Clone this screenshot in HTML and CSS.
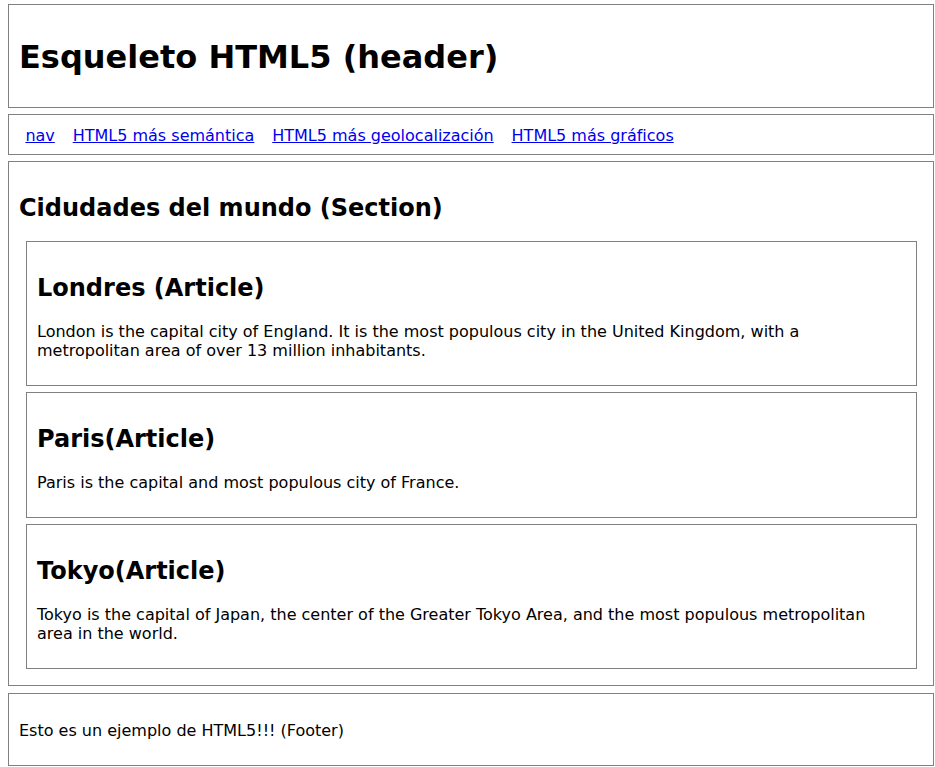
FILE: index.html
```html
<!DOCTYPE html>
<html lang="es">
<head>
<meta charset="utf-8">
<title>Esqueleto HTML5</title>
<link rel="stylesheet" href="styles.css">
</head>
<body>
<div class="page">
  <header class="box">
    <h1 class="title">Esqueleto HTML5 (header)</h1>
  </header>
  <nav class="box nav">
    <a href="#">nav</a>
    <a href="#">HTML5 más semántica</a>
    <a href="#">HTML5 más geolocalización</a>
    <a href="#">HTML5 más gráficos</a>
  </nav>
  <section class="box section">
    <h2 class="heading">Cidudades del mundo (Section)</h2>
    <article class="box article">
      <h2 class="heading">Londres (Article)</h2>
      <p class="text">London is the capital city of England. It is the most populous city in the United Kingdom, with a metropolitan area of over 13 million inhabitants.</p>
    </article>
    <article class="box article">
      <h2 class="heading">Paris(Article)</h2>
      <p class="text">Paris is the capital and most populous city of France.</p>
    </article>
    <article class="box article">
      <h2 class="heading">Tokyo(Article)</h2>
      <p class="text">Tokyo is the capital of Japan, the center of the Greater Tokyo Area, and the most populous metropolitan area in the world.</p>
    </article>
  </section>
  <footer class="box footer">
    <p class="text">Esto es un ejemplo de HTML5!!! (Footer)</p>
  </footer>
</div>
</body>
</html>
```

FILE: styles.css
```css
html, body {
  margin: 0;
  padding: 0;
  background: #ffffff;
}

body {
  font-family: "DejaVu Sans", "Liberation Sans", sans-serif;
  font-size: 16px;
  line-height: 19px;
  color: #000000;
}

.page {
  display: flex;
  flex-direction: column;
  gap: 6px;
  padding: 4px 1px 0 8px;
}

.box {
  border: 1px solid #808080;
  padding: 10px;
}

.title {
  font-size: 32px;
  font-weight: bold;
  margin: 21.44px 0 19.44px;
  padding-top: 2px;
  line-height: 39px;
}

.heading {
  font-size: 24px;
  font-weight: bold;
  margin: 19.92px 0 17.92px;
  padding-top: 2px;
  line-height: 29px;
}

.text {
  margin: 16px 0 15px;
  padding-top: 1px;
}

.nav {
  padding: 11px 10px 9px;
}

.nav a {
  color: #0000ee;
  text-decoration: underline;
  margin: 0 6.4px;
}

.section {
  display: flow-root;
}

.article {
  margin: 6.4px 6px 6.4px 7px;
}

.footer {
  margin-top: 1px;
}
```
